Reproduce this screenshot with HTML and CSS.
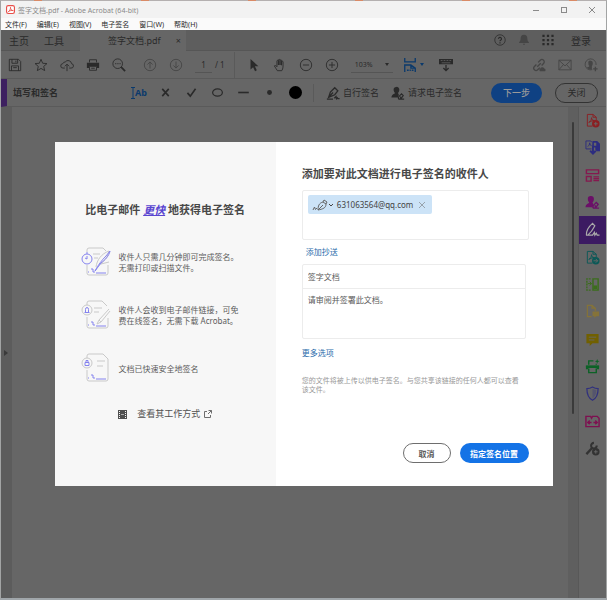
FILE: index.html
```html
<!DOCTYPE html>
<html lang="zh-CN">
<head>
    <meta charset="UTF-8">
    <meta name="viewport" content="width=device-width, initial-scale=1.0">
    <title>签字文档.pdf - Adobe Acrobat (64-bit)</title>
    <link rel="stylesheet" href="styles.css">
</head>

<body>
    <div class="window">
        <header class="title-bar">
            <svg class="logo" viewBox="0 0 16 16"><rect x="1" y="1" width="14" height="14" rx="3" fill="#fff" stroke="#e8504a" stroke-width="2"/><path d="M4 12c3-2 4-5 4-8 0 4 2 6 5 6-3-1-6 0-9 2z" fill="none" stroke="#e8504a" stroke-width="1.5"/></svg>
            <span class="title-text">签字文档.pdf - Adobe Acrobat (64-bit)</span>
            <button class="win-button" aria-label="最小化"><svg viewBox="0 0 8 8"><path d="M1 4.500h6"/></svg></button>
            <button class="win-button" aria-label="最大化"><svg viewBox="0 0 8 8"><rect x="1.5" y="1.5" width="5" height="5"/></svg></button>
            <button class="win-button" aria-label="关闭窗口"><svg viewBox="0 0 8 8"><path d="M1 1l6 6M7 1l-6 6"/></svg></button>
        </header>

        <nav class="menu-bar">
            <button>文件(F)</button>
            <button>编辑(E)</button>
            <button>视图(V)</button>
            <button>电子签名</button>
            <button>窗口(W)</button>
            <button>帮助(H)</button>
        </nav>

        <main class="app">
            <div class="tab-bar">
                <button class="tab home">主页</button>
                <button class="tab">工具</button>
                <div class="tab-active"><span>签字文档.pdf</span><button class="tab-close" aria-label="关闭标签">×</button></div>
                <div class="tab-right">
                    <button class="icon" aria-label="帮助"><svg viewBox="0 0 16 16"><circle cx="8" cy="8" r="7"/><path stroke-width="1.500" d="M6 6.5a2 2 0 1 1 2.8 1.800c-.6.3-.8.6-.8 1.200M8 11v1.500"/></svg></button>
                    <button class="icon faded" aria-label="通知"><svg viewBox="0 0 16 16"><path class="solid" d="M8 1c-3 0-4.500 2-4.500 5 0 2.500-.7 4-2 5v1h13v-1c-1.300-1-2-2.500-2-5 0-3-1.500-5-4.500-5zM6.500 13h3a1.500 1.500 0 0 1-3 0z"/></svg></button>
                    <button class="icon" aria-label="应用"><svg viewBox="0 0 16 16"><path stroke-width="3" stroke-dasharray="3 3" d="M.5 2.500h15M.5 8h15M.5 13.500h15"/></svg></button>
                    <button class="tab login">登录</button>
                </div>
            </div>

            <div class="toolbar">
                <div class="tool-group">
                    <button class="icon" aria-label="保存"><svg viewBox="0 0 16 16"><path d="M1.500 1.500h10.500l2.500 2.500v10.500h-13zM4.500 1.500V6h6.500V1.500M4 14.500V9h8v5.500M9 3v2M6 11h4"/></svg></button>
                    <button class="icon" aria-label="收藏"><svg viewBox="0 0 16 16"><path d="M8 1.500l1.900 4.500 4.900.4-3.700 3.200 1.100 4.800L8 11.900l-4.200 2.500 1.100-4.800L1.200 6.400 6.100 6z"/></svg></button>
                    <button class="icon" aria-label="上传"><svg viewBox="0 0 16 16"><path d="M5.500 11.500h-2a2.500 2.500 0 0 1-.3-5A3 3 0 0 1 6 4.500a4 4 0 0 1 7.200 2 2.500 2.500 0 0 1-.7 5h-2M8 15V7.500M5.500 9.500L8 7l2.500 2.500"/></svg></button>
                    <button class="icon" aria-label="打印"><svg viewBox="0 0 16 16"><path d="M4 5V2h8v3"/><path class="solid" d="M1 5.500h14v6h-2.500V9.500h-9v2H1z"/><path d="M4 9.500h8V14H4zM6 11.700h4"/></svg></button>
                    <button class="icon" aria-label="查找"><svg viewBox="0 0 16 16"><circle cx="6.500" cy="6.500" r="5.500"/><path stroke-width="2" d="M10.500 10.500l4.500 4.500"/><path d="M3.500 6.500h1.500M6 6.500h1.500M8.500 6.500h1.500"/></svg></button>
                </div>
                <div class="tool-group page-nav">
                    <button class="icon faded" aria-label="上一页"><svg viewBox="0 0 16 16"><circle cx="8" cy="8" r="6.500"/><path d="M8 12V4.500M5 7.500l3-3 3 3"/></svg></button>
                    <button class="icon faded" aria-label="下一页"><svg viewBox="0 0 16 16"><circle cx="8" cy="8" r="6.500"/><path d="M8 4v7.500M5 8.500l3 3 3-3"/></svg></button>
                    <input class="page-input" aria-label="页码" value="1">
                    <span class="page-total">/ 1</span>
                </div>
                <div class="tool-group view-tools">
                    <button class="icon" aria-label="选择"><svg viewBox="0 0 16 16"><path class="solid" d="M4 1l9 8.500H9l2.200 4.500-2 1L7 10.500 4 13z"/></svg></button>
                    <button class="icon" aria-label="抓手"><svg viewBox="0 0 16 16"><path d="M5 14.500C4 12.500 2.500 11 1.500 9c.8-.8 1.700-.5 3 1V3.500c0-1.200 1.700-1.200 1.700 0V8 2.500c0-1.300 1.800-1.300 1.800 0V8 3c0-1.300 1.800-1.300 1.800 0v5.200V4.500c0-1.200 1.700-1.200 1.700 0 0 5 .3 7.500-1.500 10z"/></svg></button>
                    <button class="icon" aria-label="缩小"><svg viewBox="0 0 16 16"><circle cx="8" cy="8" r="6.500"/><path d="M4.500 8h7"/></svg></button>
                    <button class="icon" aria-label="放大"><svg viewBox="0 0 16 16"><circle cx="8" cy="8" r="6.500"/><path d="M4.500 8h7M8 4.500v7"/></svg></button>
                    <div class="zoom-box">
                        <select class="zoom-select" aria-label="缩放比例"><option>103%</option></select>
                        <span class="caret"></span>
                    </div>
                    <button class="icon blue fit" aria-label="适合页面"><svg viewBox="0 0 16 16"><path stroke-width="1.500" d="M2 0v4.500h12V0M2 16V8h7l5 3.500V16M9 8v3.500h5M4.500 14h2M7.500 14h1.500M10 14h2"/></svg><span class="caret"></span></button>
                    <button class="icon" aria-label="键盘"><svg viewBox="0 0 16 16"><path class="solid" fill-rule="evenodd" d="M0 1h16v6H0zm2 1.200v1h2v-1zm3.300 0v1h2v-1zm3.300 0v1h2v-1zm3.300 0v1h2v-1zM3 5v1h10V5z"/><path stroke-width="1.500" d="M8 8v6.500M5 11.500l3 3 3-3"/></svg></button>
                </div>
                <div class="tool-group share-tools faded">
                    <button class="icon" aria-label="链接"><svg viewBox="0 0 16 16"><path stroke-width="1.500" d="M6 10l4-4M7 5l2.500-2.500a2.500 2.500 0 0 1 3.700 3.700L11 8.500M9 11l-2.500 2.500a2.500 2.500 0 0 1-3.700-3.700L5 7.500"/><path class="solid" d="M9 15a2 2 0 0 1 .5-3 2.500 2.500 0 0 1 4.500 0 2 2 0 0 1 1 3z"/></svg></button>
                    <button class="icon" aria-label="邮件"><svg viewBox="0 0 16 16"><path d="M1 2.500h14v11H1zM1 2.500l7 6.500 7-6.500M1 13.500l5.200-6M15 13.500l-5.200-6"/></svg></button>
                    <button class="icon" aria-label="添加人员"><svg viewBox="0 0 16 16"><path d="M9.500 13.300A6.300 6.300 0 1 1 13.800 8"/><path class="solid" d="M7.500 3a2.500 2.500 0 0 0-2.500 3c0 1.500.5 2.500 1.200 3-.2 1-2 1-3 2.200A6 6 0 0 0 9 13v-3.500C10 8 10 7 10 5.500A2.500 2.500 0 0 0 7.500 3z"/><path stroke-width="1.500" d="M13 10v5M10.500 12.500h5"/></svg></button>
                </div>
            </div>

            <div class="sign-bar">
                <h1 class="sign-title">填写和签名</h1>
                <div class="sign-tools">
                    <button class="icon blue text-tool" aria-label="添加文本"><svg viewBox="0 0 4 12"><path d="M0 .5h4M2 .5v11M0 11.500h4"/></svg><span>Ab</span></button>
                    <button class="icon" aria-label="叉号"><svg viewBox="0 0 16 16"><path stroke-width="2" d="M4 3.500l8 9M12 3.500l-8 9"/></svg></button>
                    <button class="icon" aria-label="勾号"><svg viewBox="0 0 16 16"><path stroke-width="2" d="M3 8.500l3.500 4L13 3.500"/></svg></button>
                    <button class="icon" aria-label="圆圈"><svg viewBox="0 0 16 16"><ellipse cx="8" cy="8" rx="6" ry="4.500" stroke-width="1.500"/></svg></button>
                    <button class="icon" aria-label="直线"><svg viewBox="0 0 16 16"><path stroke-width="2" d="M1.500 8h13"/></svg></button>
                    <button class="icon" aria-label="圆点"><svg viewBox="0 0 16 16"><circle class="solid" cx="8" cy="8" r="3"/></svg></button>
                    <button class="icon" aria-label="颜色"><svg viewBox="0 0 16 16"><circle cx="8" cy="8" r="8" fill="#000" stroke="none"/></svg></button>
                </div>
                <button class="sign-action"><svg viewBox="0 0 16 16"><path stroke-width="1.500" d="M3 13L5 7l5-5 3.500 3.500L10 10l-7 3zM3 13l5-5.500M1 15h7M9.500 14l2-2 .5 2.500 1-1 .5 1h2"/></svg>自行签名</button>
                <button class="sign-action request"><svg viewBox="0 0 16 16"><path class="solid" d="M6 1a3 3 0 0 0-3 3c0 2 .7 3 1.500 4C4 9.500 1 9 .5 13H8l1-3-1-2c1-1 1.500-2 1.500-4A3 3 0 0 0 6 1z"/><path stroke-width="1.300" d="M9 15c-1-1 0-3 1-4l2-2 2 2-3 4zM11 12v3h4"/></svg>请求电子签名</button>
                <button class="next-button">下一步</button>
                <button class="close-button">关闭</button>
            </div>

            <div class="workspace">
                <div class="left-strip"><span class="arrow-right"></span></div>
                <div class="canvas"></div>
                <div class="scroll-strip"><span class="scroll-thumb"></span></div>
                <aside class="tool-rail">
                    <button class="red" aria-label="创建 PDF"><svg viewBox="0 0 16 16"><path d="M8 14H2.500V1.500h6l3.500 3v3M8.500 1.500v3H12M4 10c2-1 3-3 3-5 0 2 1 3 3 3-2 0-4 1-6 2z"/><circle class="solid" cx="11.500" cy="11.500" r="4"/><path class="cut" d="M9.500 11.500h4M11.500 9.500v4"/></svg></button>
                    <button class="indigo" aria-label="合并文件"><svg viewBox="0 0 16 16"><path d="M7 9.500H1V1h5l1.500 1.500M3 7c1-1 2-2 2-4 0 2 1 3 2 3"/><path class="solid" fill-rule="evenodd" d="M8 1h5l3 3v8h-3.500L11 10.500V8H7.500zm1.500 2v3H12V3z"/><path stroke-width="2" d="M8.500 7v7M5.500 11.500l3 3 3-3"/></svg></button>
                    <button class="pink" aria-label="组织页面"><svg viewBox="0 0 16 16"><path stroke-width="1.500" d="M1.500 2h13v4h-13zM1.500 9h5v5h-5zM9 9.500h6M9 11.500h6M9 13.500h6"/></svg></button>
                    <button class="magenta" aria-label="请求电子签名"><svg viewBox="0 0 16 16"><path class="solid" d="M6 1a3 3 0 0 0-3 3c0 2 .7 3 1.500 4C4 9.500 1 9 .5 13H8l1-3-1-2c1-1 1.500-2 1.500-4A3 3 0 0 0 6 1z"/><path stroke-width="1.500" d="M9 14c-1-1 0-3 1-4l2-2 2 2-3 4zM11 11v3h4"/></svg></button>
                    <button class="active" aria-label="填写和签名"><svg viewBox="0 0 16 16"><path stroke-width="1.300" d="M1.500 13.500c0-4 3-9 6.500-12l2.500 2.500c-2 4-4 7-7 9.500M1 14h7l2-3 .5 3 1.500-2 1 2h2.500"/></svg></button>
                    <button class="teal" aria-label="导出 PDF"><svg viewBox="0 0 16 16"><path d="M8 14H2.500V1.500h6l3.500 3v3M8.500 1.500v3H12M4 10c2-1 3-3 3-5 0 2 1 3 3 3-2 0-4 1-6 2z"/><circle class="solid" cx="11.500" cy="11.500" r="4"/><path class="cut" d="M9 11.500h4.500M11.500 9.500l2 2-2 2"/></svg></button>
                    <button class="green" aria-label="比较文件"><svg viewBox="0 0 16 16"><path d="M8.500 2H14v12H8.500z" stroke-width="1.500"/><path class="solid" d="M9 9h4v4H9z"/><path stroke-dasharray="2 1" stroke-width="1.500" d="M6 2H2v12h5"/><path d="M3 7h4M5 5l2 2-2 2"/></svg></button>
                    <button class="sand" aria-label="发送以供注释"><svg viewBox="0 0 16 16"><path stroke-width="1.300" d="M7 13.500H2.500v-12h5l3.500 3v3M7.500 1.500v3H11"/><path class="solid" d="M8 8h7v5h-3l-2 2v-2H8z"/></svg></button>
                    <button class="gold" aria-label="注释"><svg viewBox="0 0 16 16"><path class="solid" d="M1.500 2h13v10H8l-3 3v-3H1.500z"/><path class="cut" d="M4 5.500h8M4 8.500h6"/></svg></button>
                    <button class="emerald" aria-label="扫描"><svg viewBox="0 0 16 16"><path stroke-width="1.500" d="M4 6V2h5M4 10v4.500h8V10M12 5v1M1 8h14"/><path class="solid" d="M1 7h14v4h-2.500V9.500h-9V11H1zM13 0l.7 1.800 1.800.7-1.800.7L13 5l-.7-1.800-1.800-.7 1.800-.7z"/></svg></button>
                    <button class="navy" aria-label="保护"><svg viewBox="0 0 16 16"><path stroke-width="1.300" d="M8 1c1.700 1 3.500 1.700 6 1.700 0 6-1 10-6 12.500C3 12.700 2 8.700 2 2.700 4.500 2.700 6.300 2 8 1z"/><path fill="currentColor" stroke="none" d="M8 3c1 .6 2.500 1 4 1.200 0 4-1 7-4 9z" opacity=".3"/></svg></button>
                    <button class="rose" aria-label="优化 PDF"><svg viewBox="0 0 16 16"><path stroke-width="1.500" d="M1 2.500h5l1 2 1-2h5l2 2v9H1zM3 9h4M9 9h4M5 7L3 9l2 2M11 7l2 2-2 2"/></svg></button>
                    <button class="grey" aria-label="更多工具"><svg viewBox="0 0 16 16"><path stroke-width="2.500" d="M1.500 14L8 7"/><path stroke-width="2.200" d="M12.500 4.800A3 3 0 1 1 9.500 2"/><circle class="solid" cx="11.500" cy="11.500" r="4"/><path class="cut" d="M9.500 11.500h4M11.500 9.500v4"/></svg></button>
                </aside>
            </div>

            <div class="overlay">
                <section class="dialog" role="dialog" aria-labelledby="dialog-title">
                    <div class="intro">
                        <h2>比电子邮件 <em>更快</em> 地获得电子签名</h2>
                        <ul class="benefits">
                            <li>
                                <svg class="benefit-icon" viewBox="0 0 30 30"><path class="page" d="M6 5V3q0-2 2-2h14l3 3M6 18v8q0 2 2 2h17q2 0 2-2v-8M12 7h7M13 11h4"/><path class="page" d="M15 20c1-7 5-13 13-16-1 5-4 10-10 14M20 17l8-2"/><circle class="accent" cx="6" cy="12" r="5"/><path class="accent" d="M6 9v3l-2-1M5 6h2M14 24c3-6 7-11 11-15l4-5c-1 5-5 9-9 12zM10 22h2v3h2M7 25h1M15 26h10"/></svg>
                                <p>收件人只需几分钟即可完成签名。无需打印或扫描文件。</p>
                            </li>
                            <li>
                                <svg class="benefit-icon" viewBox="0 0 30 30"><path class="page" d="M6 5V3q0-2 2-2h13l5 5M6 17v9q0 2 2 2h17q2 0 2-2v-8M13 8h8M13 12h5M28 9L18 20l-2 4 4-2 9-11M18 20l2 2"/><circle class="page" cx="6" cy="10" r="5"/><path class="accent" d="M3.500 12.500h5M4.500 12V9.500q0-2 1.500-2t1.500 2V12M10 22h2v3h2M7 25h1M15 26h10"/></svg>
                                <p>收件人会收到电子邮件链接，可免费在线签名，无需下载 Acrobat。</p>
                            </li>
                            <li>
                                <svg class="benefit-icon" viewBox="0 0 30 30"><path class="page" d="M6 5V3q0-2 2-2h14l5 5v20q0 2-2 2H8q-2 0-2-2v-9M16 8h8M16 13h6"/><circle class="page" cx="6" cy="10" r="5"/><path class="accent" d="M4 9.500h4v3H4zM5 9.500V7.500h2v2M10 22h2v3h2M7 25h1M15 26h10"/></svg>
                                <p>文档已快速安全地签名</p>
                            </li>
                        </ul>
                        <a class="how-link" href="#">
                            <svg class="film" viewBox="0 0 9 9"><path fill="#505050" stroke="none" d="M0 0h9v9H0z"/><path stroke="#f7f7f7" stroke-dasharray="1 1" d="M1.500 1v7M7.500 1v7"/><path stroke="#aaa" d="M3 4.500h3"/></svg>
                            <span>查看其工作方式</span>
                            <svg class="external" viewBox="0 0 8 8"><path fill="none" stroke="#6e6e6e" d="M3 1.500H.5v6h6V5M4.500.5h3v3M7.500.5L4 4"/></svg>
                        </a>
                    </div>

                    <form class="recipients">
                        <h2 id="dialog-title">添加要对此文档进行电子签名的收件人</h2>
                        <div class="recipient-box">
                            <span class="chip">
                                <svg class="pen" viewBox="0 0 16 12"><path d="M6 11c0-4 1-7 5-8l3 2c0 4-3 5-8 6zM6 11l5-5M11 3l1-2 3 2-1 2M1 11l1.500-3 1 2.500L5 9"/></svg>
                                <svg class="chevron" viewBox="0 0 6 6"><path d="M1 2l2 2 2-2"/></svg>
                                <span class="email">631063564@qq.com</span>
                                <button type="button" class="chip-close" aria-label="移除"><svg viewBox="0 0 8 8"><path d="M1 1l6 6M7 1l-6 6"/></svg></button>
                            </span>
                        </div>
                        <a class="cc-link" href="#">添加抄送</a>
                        <div class="message-box">
                            <input type="text" aria-label="主题" value="签字文档">
                            <textarea aria-label="消息">请审阅并签署此文档。</textarea>
                        </div>
                        <a class="more-link" href="#">更多选项</a>
                        <p class="notice">您的文件将被上传以供电子签名。与您共享该链接的任何人都可以查看该文件。</p>
                        <div class="dialog-buttons">
                            <button type="button" class="cancel-button">取消</button>
                            <button type="button" class="confirm-button">指定签名位置</button>
                        </div>
                    </form>
                </section>
            </div>
        </main>
    </div>
</body>
</html>
```

FILE: styles.css
```css
* {
    box-sizing: border-box;
}

body {
    margin: 0;
    font-family: "Noto Sans", "Noto Sans CJK SC", sans-serif;
    font-size: 9px;
    color: #2a2a2a;
    background: repeating-linear-gradient(90deg, #b4b0b0 0 34px, #d98a66 34px 42px, #b4b0b0 42px 107px);
}

button {
    border: none;
    padding: 0;
    background: none;
    color: inherit;
    font: inherit;
    white-space: nowrap;
    cursor: pointer;
}

input,
select,
textarea {
    border: none;
    border-radius: 0;
    padding: 0;
    background: none;
    color: inherit;
    font: inherit;
    outline: none;
}

h1,
h2,
p,
ul {
    margin: 0;
    padding: 0;
}

a {
    text-decoration: none;
}

svg {
    display: block;
    fill: none;
    stroke: currentColor;
    flex-shrink: 0;
}

.solid {
    fill: currentColor;
    stroke: none;
}

.cut {
    stroke: #666;
}

.window {
    display: flex;
    flex-direction: column;
    min-height: 100vh;
    border: 1px solid #a2a4a4;
    border-top-color: transparent;
    border-bottom: 2px solid #a0a6aa;
}

/* title and menu */
.title-bar {
    display: flex;
    align-items: center;
    height: 17px;
    padding: 0 4px 0 5px;
    background: #f2f2f2;
    color: #8a8a8a;
    font-size: 7px;
}

.logo {
    width: 9px;
    height: 9px;
}

.title-text {
    flex: 1;
    margin-left: 3px;
}

.win-button {
    display: flex;
    justify-content: center;
    width: 20px;
    margin-left: 8px;
}

.win-button svg {
    width: 8px;
    height: 8px;
}

.menu-bar {
    display: flex;
    align-items: center;
    gap: 10px;
    height: 12px;
    padding-left: 4px;
    background: #fafafa;
    font-size: 7px;
}

.app {
    position: relative;
    flex: 1;
    display: flex;
    flex-direction: column;
    background: #666;
}

/* tabs */
.tab-bar {
    display: flex;
    height: 21px;
    background: #5e5e5e;
    border-bottom: 1px solid #565656;
}

.tab {
    font-size: 10px;
    margin-left: 15px;
}

.tab.home {
    margin-left: 8px;
}

.tab-active {
    display: flex;
    align-items: center;
    justify-content: space-between;
    width: 106px;
    height: 21px;
    margin-left: 16px;
    padding: 0 5px 0 28px;
    background: #666;
    font-size: 9px;
}

.tab-right {
    display: flex;
    align-items: center;
    margin-left: auto;
    padding-right: 15px;
}

.tab.login {
    margin-left: 11px;
}

/* toolbars */
.icon {
    display: flex;
    align-items: center;
    justify-content: center;
    width: 26px;
    height: 26px;
}

.icon svg {
    width: 14px;
    height: 14px;
}

.tab-right .icon {
    width: 24px;
    height: 20px;
}

.tab-right .icon svg {
    width: 12px;
    height: 12px;
}

.faded {
    color: #454545;
}

.blue {
    color: #0b3a6c;
}

.toolbar {
    display: flex;
    align-items: center;
    height: 28px;
    padding: 0 2px 0 1px;
    border-bottom: 1px solid #5a5a5a;
}

.tool-group {
    display: flex;
    align-items: center;
}

.page-nav {
    margin-left: 5px;
    padding-right: 9px;
    border-right: 1px solid #5a5a5a;
    font-size: 8px;
}

.page-input {
    width: 17px;
    height: 16px;
    margin: 0 3px 0 6px;
    border-bottom: 1px solid #555;
    text-align: center;
}

.view-tools {
    padding-left: 6px;
}

.zoom-box {
    display: flex;
    align-items: center;
    justify-content: space-between;
    width: 42px;
    height: 16px;
    margin: 0 6px;
    padding: 0 4px;
    border-bottom: 1px solid #555;
    font-size: 7px;
}

.zoom-select {
    appearance: none;
}

.caret {
    border: 2px solid transparent;
    border-top: 3px solid currentColor;
    border-bottom: none;
}

.fit {
    gap: 3px;
    margin: 0 6px 0 2px;
}

.share-tools {
    margin-left: auto;
}

.sign-bar {
    display: flex;
    align-items: center;
    height: 28px;
    padding-right: 8px;
    border-left: 6px solid #3d2060;
    border-bottom: 1px solid #5a5a5a;
}

.sign-title {
    width: 119px;
    padding-left: 6px;
    font-size: 9px;
    font-weight: 600;
}

.sign-tools {
    display: flex;
    padding-right: 5px;
    border-right: 1px solid #5a5a5a;
}

.sign-tools .icon {
    height: 18px;
}

.sign-tools .icon svg {
    width: 13px;
    height: 13px;
}

.sign-tools .text-tool {
    font-size: 9px;
    font-weight: 700;
}

.sign-tools .text-tool svg {
    width: 4px;
    height: 12px;
}

.sign-action {
    display: flex;
    align-items: center;
    gap: 3px;
    margin-left: 12px;
}

.sign-action svg {
    width: 14px;
    height: 14px;
}

.next-button,
.close-button {
    height: 20px;
    border-radius: 10px;
}

.next-button {
    width: 51px;
    margin-left: auto;
    background: #0f4183;
    color: #9a9a9a;
    font-weight: 500;
}

.close-button {
    width: 43px;
    margin-left: 13px;
    border: 1px solid #333;
}

/* document area */
.workspace {
    flex: 1;
    display: flex;
}

.left-strip {
    display: flex;
    align-items: center;
    width: 11px;
    padding-left: 3px;
    background: #5c5c5c;
}

.arrow-right {
    border: 3px solid transparent;
    border-left: 4px solid #3a3a3a;
    border-right: none;
}

.canvas {
    flex: 1;
}

.scroll-strip {
    width: 11px;
    padding: 15px 4px 0;
    background: #5f5f5f;
    border-right: 1px solid #585858;
}

.scroll-thumb {
    display: block;
    height: 292px;
    width: 2px;
    border-radius: 1px;
    background: #3a3a3a;
}

.tool-rail {
    display: flex;
    flex-direction: column;
    width: 27px;
    height: 355px;
}

.tool-rail button {
    flex: 1;
    display: flex;
    align-items: center;
    justify-content: center;
}

.tool-rail svg {
    width: 15px;
    height: 15px;
}

.tool-rail .active {
    background: #3c1b62;
    color: #aaa;
}

.red { color: #8b1f22; }
.indigo { color: #2c2c80; }
.pink { color: #85194f; }
.magenta { color: #6b1068; }
.teal { color: #0b5957; }
.green { color: #3b6d1c; }
.sand { color: #857339; }
.gold { color: #716000; }
.emerald { color: #0c6226; }
.navy { color: #30307e; }
.rose { color: #7e0f50; }
.grey { color: #333; }

/* dialog */
.overlay {
    position: absolute;
    inset: 0;
    display: flex;
    align-items: center;
    justify-content: center;
}

.dialog {
    display: grid;
    grid-template-columns: 4fr 5fr;
    width: 90%;
    max-width: 498px;
    background: #fff;
    color: #5c5c5c;
    font-size: 8px;
}

.dialog h2 {
    font-size: 11px;
    font-weight: 700;
    line-height: 16px;
    color: #484848;
}

.intro {
    padding: 60px 26px 0;
    background: #f7f7f7;
}

.intro h2 {
    text-align: center;
    white-space: nowrap;
}

.intro em {
    color: #5a45d0;
    text-decoration: underline;
}

.benefits {
    display: flex;
    flex-direction: column;
    gap: 23px;
    margin-top: 29px;
    list-style: none;
}

.benefits li {
    display: flex;
    align-items: center;
    gap: 8px;
    padding-right: 4px;
}

.benefits p {
    line-height: 11px;
}

.benefit-icon {
    width: 30px;
    height: 30px;
}

.page {
    stroke: #c9c9c9;
}

.accent {
    stroke: #8583ee;
}

.how-link {
    display: flex;
    align-items: center;
    justify-content: center;
    margin-top: 23px;
    color: #505050;
    font-size: 9px;
    line-height: 16px;
}

.film {
    width: 9px;
    height: 9px;
    margin-right: 10px;
}

.external {
    width: 8px;
    height: 8px;
    margin-left: 4px;
}

.recipients {
    display: flex;
    flex-direction: column;
    align-items: flex-start;
    padding: 24px 24px 23px 26px;
}

.recipient-box {
    width: 100%;
    height: 50px;
    margin-top: 8px;
    padding: 4px 5px;
    border: 1px solid #ececec;
    border-radius: 2px;
}

.chip {
    display: inline-flex;
    align-items: center;
    height: 19px;
    padding: 0 6px 0 4px;
    border-radius: 2px;
    background: #cce3f7;
    color: #444;
}

.pen {
    width: 16px;
    height: 12px;
    color: #666;
}

.chevron {
    width: 6px;
    height: 6px;
    margin-right: 3px;
}

.email {
    font-size: 8px;
}

.chip-close {
    margin-left: 5px;
    color: #98a3ac;
}

.chip-close svg {
    width: 8px;
    height: 8px;
}

.cc-link,
.more-link {
    color: #2a6cab;
    line-height: 12px;
}

.cc-link {
    margin: 6px 0 6px 4px;
}

.message-box {
    display: flex;
    flex-direction: column;
    width: 99%;
    border: 1px solid #ececec;
    border-radius: 2px;
}

.message-box input {
    height: 24px;
    padding: 0 5px;
    border-bottom: 1px solid #ececec;
}

.message-box textarea {
    height: 49px;
    padding: 5px;
    line-height: 12px;
    resize: none;
}

.more-link {
    margin-top: 8px;
}

.notice {
    margin-top: 17px;
    padding-right: 4px;
    color: #999;
    font-size: 7px;
    line-height: 9px;
}

.dialog-buttons {
    display: flex;
    gap: 9px;
    margin: 49px 0 0 auto;
    font-weight: 700;
}

.dialog-buttons button {
    height: 20px;
    border-radius: 10px;
}

.dialog-buttons .cancel-button {
    width: 48px;
    border: 1px solid #6e6e6e;
}

.confirm-button {
    width: 69px;
    background: #1473e6;
    color: #fff;
}
```
